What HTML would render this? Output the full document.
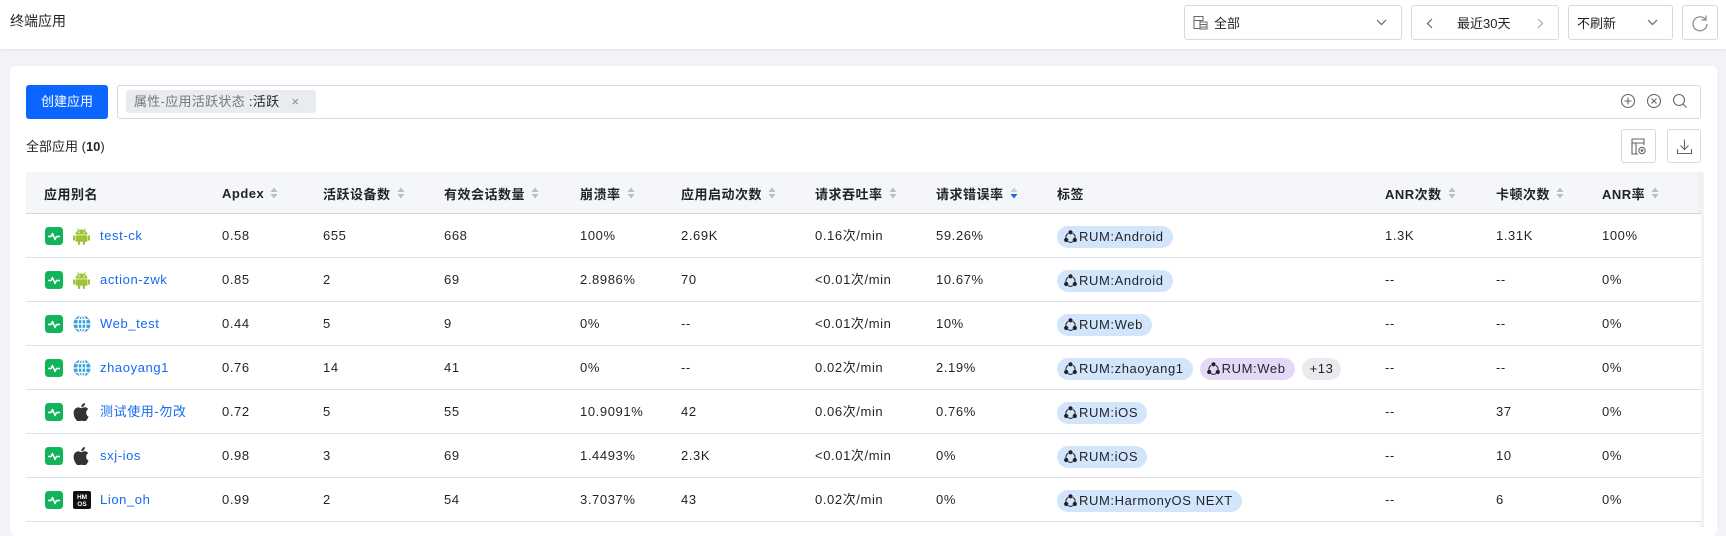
<!DOCTYPE html>
<html><head><meta charset="utf-8">
<style>
*{box-sizing:border-box;margin:0;padding:0}
body{width:1726px;height:527px;overflow:hidden;background:#f2f3f6;font-family:"Liberation Sans","Noto Sans CJK SC",sans-serif;font-size:13px;color:#1f2329;position:relative}
.abs{position:absolute}
.hdr{left:0;top:0;width:1726px;height:49px;background:#fff;box-shadow:0 1px 3px rgba(0,0,0,.08)}
.box{position:absolute;border:1px solid #d6dae0;border-radius:3px;background:#fff;height:35px;top:5px;display:flex;align-items:center;font-size:13px}
.card{left:10px;top:66px;width:1707px;height:470px;background:#fff;border-radius:6px}
.th{left:26px;top:172px;width:1675px;height:42px;background:#f5f6f9;border-bottom:1px solid #d3d7de}
.hc{position:absolute;top:0;height:42px;display:flex;align-items:center;font-weight:bold;font-size:13px;letter-spacing:.5px;color:#1f2329;white-space:nowrap}
.sort{display:block;margin-left:6px;width:8px;height:12px}
.sort svg{display:block}
.row{left:26px;width:1675px;height:44px;border-bottom:1px solid #dcdfe5;background:#fff}
.c{position:absolute;top:0;height:43px;line-height:43px;white-space:nowrap;font-size:13px;letter-spacing:.6px;color:#1f2329}
.nm{color:#1769f0}
.tag{display:inline-block;height:22px;line-height:22px;border-radius:11px;padding:0 9px 0 7px;background:#d3e5fb;font-size:13px;color:#1f2329;vertical-align:middle;margin-right:7px}
.tag svg{vertical-align:-2px;margin-right:2px}
.pu{background:#e3d9f7}
.gr{background:#e8eaee;padding:0 8px}
.ic{position:absolute;top:13px}
</style></head><body>
<div class="abs hdr"></div>
<div class="abs" style="left:10px;top:11px;font-size:14px;color:#1f2329">终端应用</div>

<div class="box" style="left:1184px;width:218px">
 <svg style="margin-left:8px" width="15" height="15" viewBox="0 0 15 15" fill="none" stroke="#666" stroke-width="1"><rect x="1" y="1.5" width="9" height="4"/><rect x="1" y="5.5" width="6" height="8"/><rect x="7" y="7" width="7" height="2.5"/><rect x="7" y="9.5" width="7" height="2.5"/><rect x="7" y="12" width="7" height="2"/></svg>
 <span style="margin-left:6px">全部</span>
 <svg style="position:absolute;right:14px;top:13px" width="11" height="7" viewBox="0 0 11 7" fill="none" stroke="#666" stroke-width="1.2"><path d="M1 1l4.5 4.5L10 1"/></svg>
</div>
<div class="box" style="left:1411px;width:148px">
 <svg style="position:absolute;left:14px;top:12px" width="7" height="11" viewBox="0 0 7 11" fill="none" stroke="#666" stroke-width="1.2"><path d="M6 1L1.5 5.5 6 10"/></svg>
 <span style="position:absolute;left:45px">最近30天</span>
 <svg style="position:absolute;right:14px;top:12px" width="7" height="11" viewBox="0 0 7 11" fill="none" stroke="#aaa" stroke-width="1.2"><path d="M1 1l4.5 4.5L1 10"/></svg>
</div>
<div class="box" style="left:1568px;width:105px">
 <span style="margin-left:8px">不刷新</span>
 <svg style="position:absolute;right:14px;top:13px" width="11" height="7" viewBox="0 0 11 7" fill="none" stroke="#666" stroke-width="1.2"><path d="M1 1l4.5 4.5L10 1"/></svg>
</div>
<div class="box" style="left:1682px;width:36px;justify-content:center">
 <svg width="18" height="18" viewBox="0 0 18 18" fill="none" stroke="#888" stroke-width="1.2"><path d="M14.5 5.5A7 7 0 1 0 16 10"/><path d="M15 1.5v4.5h-4.5"/></svg>
</div>

<div class="abs card"></div>
<div class="abs" style="left:26px;top:85px;width:82px;height:34px;background:#0a66ff;border-radius:3px;color:#fff;font-size:13px;line-height:34px;text-align:center">创建应用</div>
<div class="abs" style="left:117px;top:85px;width:1584px;height:34px;border:1px solid #d6dae0;border-radius:3px;background:#fff"></div>
<div class="abs" style="left:126px;top:90px;width:190px;height:23px;background:#e8ebef;border-radius:3px;line-height:23px;padding-left:8px;font-size:13px;color:#777;letter-spacing:.3px">属性-应用活跃状态 <span style="color:#1f2329">:活跃</span><span style="margin-left:12px;color:#888">×</span></div>
<svg class="abs" style="left:1620px;top:93px" width="70" height="16" viewBox="0 0 70 16" fill="none" stroke="#666" stroke-width="1.1">
 <circle cx="8" cy="8" r="6.5"/><path d="M8 4.5v7M4.5 8h7"/>
 <circle cx="34" cy="8" r="6.5"/><path d="M31.5 5.5l5 5M36.5 5.5l-5 5"/>
 <circle cx="59" cy="7" r="5.5"/><path d="M63 11l3.5 3.5"/>
</svg>
<div class="abs" style="left:26px;top:136px;font-size:13px">全部应用 (<b>10</b>)</div>
<div class="abs" style="left:1621px;top:129px;width:35px;height:34px;border:1px solid #d6dae0;border-radius:3px;background:#fff">
 <svg style="position:absolute;left:9px;top:8px" width="16" height="17" viewBox="0 0 16 17" fill="none" stroke="#666" stroke-width="1.1"><path d="M1 1h12v6M1 1v15h6M1 5h12M5 5v11"/><circle cx="11" cy="12.5" r="3.2"/><circle cx="11" cy="12.5" r=".8" fill="#666"/></svg>
</div>
<div class="abs" style="left:1667px;top:129px;width:34px;height:34px;border:1px solid #d6dae0;border-radius:3px;background:#fff">
 <svg style="position:absolute;left:8px;top:8px" width="17" height="17" viewBox="0 0 17 17" fill="none" stroke="#666" stroke-width="1.1"><path d="M8.5 1.5v10M4.5 7.5l4 4 4-4M1.5 11v4.5h14V11"/></svg>
</div>

<div class="abs th">
 <div class="hc" style="left:18px">应用别名</div>
 <div class="hc" style="left:196px">Apdex<i class="sort s"></i></div>
 <div class="hc" style="left:297px">活跃设备数<i class="sort s"></i></div>
 <div class="hc" style="left:418px">有效会话数量<i class="sort s"></i></div>
 <div class="hc" style="left:554px">崩溃率<i class="sort s"></i></div>
 <div class="hc" style="left:655px">应用启动次数<i class="sort s"></i></div>
 <div class="hc" style="left:789px">请求吞吐率<i class="sort s"></i></div>
 <div class="hc" style="left:910px">请求错误率<i class="sort a"></i></div>
 <div class="hc" style="left:1031px">标签</div>
 <div class="hc" style="left:1359px">ANR次数<i class="sort s"></i></div>
 <div class="hc" style="left:1470px">卡顿次数<i class="sort s"></i></div>
 <div class="hc" style="left:1576px">ANR率<i class="sort s"></i></div>
</div>
<div class="abs" style="left:1696px;top:172px;width:8px;height:355px;background:linear-gradient(90deg,rgba(0,0,0,0),rgba(0,0,0,.06))"></div>

<div id="rows"></div>
<script>
var sortSvg='<svg width="8" height="12" viewBox="0 0 8 12"><path d="M4 0.5L7.5 5H0.5z" fill="#b9bec8"/><path d="M4 11.5L7.5 7H0.5z" fill="#b9bec8"/></svg>';
var sortA='<svg width="8" height="12" viewBox="0 0 8 12"><path d="M4 0.5L7.5 5H0.5z" fill="#c9ced6"/><path d="M4 11.5L7.5 7H0.5z" fill="#1769f0"/></svg>';
document.querySelectorAll('.sort.s').forEach(function(e){e.innerHTML=sortSvg});
document.querySelectorAll('.sort.a').forEach(function(e){e.innerHTML=sortA});
var green='<svg class="ic" style="left:19px" width="18" height="18" viewBox="0 0 18 18"><rect width="18" height="18" rx="3.5" fill="#12b45a"/><path d="M3 9.5h3l1.5-3 2.5 6 1.5-3H15" fill="none" stroke="#fff" stroke-width="1.5" stroke-linejoin="round"/></svg>';
var os={
a:'<svg class="ic" style="left:47px" width="17" height="18" viewBox="0 0 17 18"><path d="M4.5 1.5l1.5 2M12.5 1.5L11 3.5" stroke="#9fc23a" stroke-width="1"/><path d="M2.5 7.5a6 5 0 0 1 12 0z" fill="#9fc23a"/><circle cx="6" cy="5.2" r=".7" fill="#fff"/><circle cx="11" cy="5.2" r=".7" fill="#fff"/><rect x="2.5" y="8.3" width="12" height="6.5" rx="1" fill="#9fc23a"/><rect x="0" y="8.3" width="2" height="5.5" rx="1" fill="#9fc23a"/><rect x="15" y="8.3" width="2" height="5.5" rx="1" fill="#9fc23a"/><rect x="5" y="14" width="2.2" height="4" rx="1" fill="#9fc23a"/><rect x="9.8" y="14" width="2.2" height="4" rx="1" fill="#9fc23a"/></svg>',
w:'<svg class="ic" style="left:47px" width="18" height="18" viewBox="0 0 18 18"><circle cx="9" cy="9" r="8.5" fill="#3b9fdc"/><g fill="none" stroke="#fff" stroke-width="1.3"><path d="M9 .5v17M.5 9h17M2.5 4.5h13M2.5 13.5h13"/><ellipse cx="9" cy="9" rx="4" ry="8.5"/></g></svg>',
i:'<svg class="ic" style="left:47px" width="16" height="18" viewBox="0 0 16 18"><path d="M13.2 9.6c0-2.3 1.9-3.4 2-3.5-1.1-1.6-2.8-1.8-3.4-1.8-1.4-.1-2.8.9-3.5.9-.7 0-1.8-.8-3-.8C3.7 4.4 2.2 5.3 1.4 6.8c-1.6 2.8-.4 7 1.2 9.3.8 1.1 1.7 2.4 2.9 2.3 1.2 0 1.6-.7 3-.7s1.8.7 3 .7c1.3 0 2-1.1 2.8-2.3.9-1.3 1.2-2.5 1.300-2.6-.1 0-2.4-.9-2.4-3.9zM11 2.9c.6-.8 1.1-1.8 1-2.9-.9 0-2.1.6-2.7 1.4-.6.7-1.1 1.8-1 2.8 1 .1 2.1-.5 2.7-1.300z" fill="#333"/></svg>',
h:'<svg class="ic" style="left:47px" width="18" height="18" viewBox="0 0 18 18"><rect width="18" height="18" rx="2" fill="#111"/><text x="9" y="8" font-size="6.5" font-weight="bold" fill="#fff" text-anchor="middle" font-family="Liberation Sans,sans-serif">HM</text><text x="9" y="15" font-size="6.5" font-weight="bold" fill="#fff" text-anchor="middle" font-family="Liberation Sans,sans-serif">OS</text></svg>'
};
var ti='<svg width="13" height="13" viewBox="0 0 13 13" fill="none" stroke="#222" stroke-width="1"><path d="M4.3 3.3A4.6 4.6 0 0 0 2 8M11 8a4.6 4.6 0 0 0-2.3-4.7M4 11.6a4.6 4.6 0 0 0 5 0"/><circle cx="6.5" cy="2.3" r="1.6" fill="#222"/><circle cx="2.2" cy="10" r="1.6" fill="#222"/><circle cx="10.8" cy="10" r="1.6" fill="#222"/></svg>';
function tag(t,c){return '<span class="tag '+(c||'')+'">'+ti+t+'</span>'}
var data=[
['a','test-ck','0.58','655','668','100%','2.69K','0.16次/min','59.26%',tag('RUM:Android'),'1.3K','1.31K','100%'],
['a','action-zwk','0.85','2','69','2.8986%','70','&lt;0.01次/min','10.67%',tag('RUM:Android'),'--','--','0%'],
['w','Web_test','0.44','5','9','0%','--','&lt;0.01次/min','10%',tag('RUM:Web'),'--','--','0%'],
['w','zhaoyang1','0.76','14','41','0%','--','0.02次/min','2.19%',tag('RUM:zhaoyang1')+tag('RUM:Web','pu')+'<span class="tag gr">+13</span>','--','--','0%'],
['i','测试使用-勿改','0.72','5','55','10.9091%','42','0.06次/min','0.76%',tag('RUM:iOS'),'--','37','0%'],
['i','sxj-ios','0.98','3','69','1.4493%','2.3K','&lt;0.01次/min','0%',tag('RUM:iOS'),'--','10','0%'],
['h','Lion_oh','0.99','2','54','3.7037%','43','0.02次/min','0%',tag('RUM:HarmonyOS NEXT'),'--','6','0%']
];
var xs=[196,297,418,554,655,789,910,1031,1359,1470,1576];
var h='';
data.forEach(function(r,i){
 h+='<div class="abs row" style="top:'+(214+i*44)+'px">'+green+os[r[0]]+'<div class="c nm" style="left:74px">'+r[1]+'</div>';
 for(var k=0;k<11;k++)h+='<div class="c" style="left:'+xs[k]+'px">'+r[k+2]+'</div>';
 h+='</div>';
});
document.getElementById('rows').innerHTML=h;
</script>
</body></html>
